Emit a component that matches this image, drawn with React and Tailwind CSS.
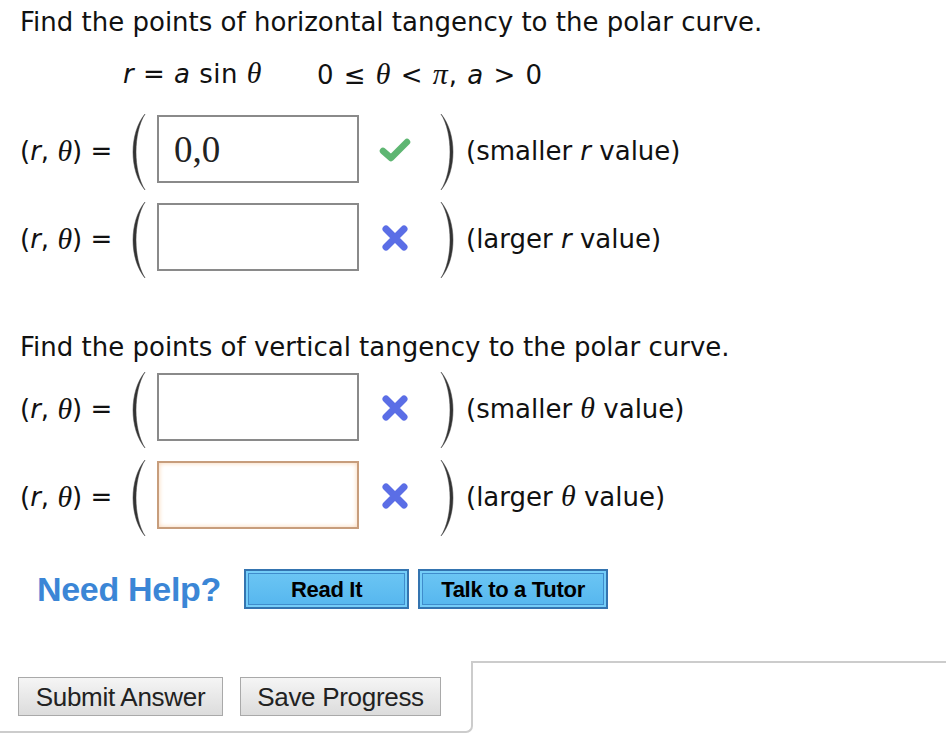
import React from "react";

const sans = { fontFamily: '"DejaVu Sans", Verdana, sans-serif' };

function Th() {
  return <span className="italic font-['Liberation_Serif',serif] text-[1.15em] leading-none">θ</span>;
}

function I({ children }) {
  return <span className="italic">{children}</span>;
}

function LeftParen() {
  return (
    <svg width="30" height="78" viewBox="0 0 30 78" className="shrink-0 -mt-[2px]">
      <path d="M20 1 C4 20, 4 58, 20 77 C8 58, 8 20, 20 1 Z" fill="#333" stroke="#444" strokeWidth="0.5" />
    </svg>
  );
}

function RightParen() {
  return (
    <svg width="30" height="78" viewBox="0 0 30 78" className="shrink-0 -mt-[2px]">
      <path d="M10 1 C26 20, 26 58, 10 77 C22 58, 22 20, 10 1 Z" fill="#333" stroke="#444" strokeWidth="0.5" />
    </svg>
  );
}

function Check() {
  return (
    <svg width="34" height="26" viewBox="0 0 34 26">
      <path d="M5 14 L13 21 L29 5" fill="none" stroke="#5eb672" strokeWidth="6.5" strokeLinecap="round" strokeLinejoin="round" />
    </svg>
  );
}

function Cross() {
  return (
    <svg width="28" height="28" viewBox="0 0 28 28">
      <path d="M5 5 L23 23 M23 5 L5 23" fill="none" stroke="#5b6ee6" strokeWidth="7" strokeLinecap="round" />
    </svg>
  );
}

function Row({ value, ok, focus, label, className = "" }) {
  return (
    <div className={"flex items-start h-[68px] " + className}>
      <div className="w-[105px] h-[68px] flex items-center pt-[4px] text-[26px] text-[#111] whitespace-nowrap">
        (<I>r</I>,&nbsp;<Th />) =
      </div>
      <LeftParen />
      <div
        className={
          "ml-[2px] w-[202px] h-[68px] shrink-0 flex items-center pl-[15px] bg-white border-2 " +
          (focus
            ? "border-[#c79d7c] shadow-[inset_0_0_5px_#f8d2b0]"
            : "border-[#8a8a8a]")
        }
      >
        {value && (
          <span className="font-['Liberation_Serif',serif] text-[37px] text-[#222] leading-none">
            {value}
          </span>
        )}
      </div>
      <div className="w-[72px] h-[68px] flex items-center justify-center pt-[2px]">
        {ok ? <Check /> : <Cross />}
      </div>
      <RightParen />
      <div className="ml-[5px] h-[68px] flex items-center pt-[4px] text-[26px] text-[#111] whitespace-nowrap">
        {label}
      </div>
    </div>
  );
}

const blueBtn =
  "h-[40px] border-2 border-[#3474b0] bg-gradient-to-b from-[#6cc6f4] to-[#55b6ee] shadow-[inset_0_0_0_2px_#74cdf8,inset_0_0_0_3px_#3f8ccc] font-['Liberation_Sans',Arial,sans-serif] font-bold text-[22px] text-black tracking-[-0.3px]";

const grayBtn =
  "h-[39px] border border-[#a9a9a9] bg-gradient-to-b from-[#f5f5f5] to-[#dcdcdc] font-['Liberation_Sans',Arial,sans-serif] text-[26px] text-[#222] tracking-[-0.3px]";

export default function App() {
  return (
    <div className="w-[946px] h-[738px] bg-white overflow-hidden" style={sans}>
      <div className="pl-[20px]">
        <div className="h-[44px] leading-[44px] text-[26px] text-[#111] whitespace-nowrap">
          Find the points of horizontal tangency to the polar curve.
        </div>
        <div className="h-[61px] flex items-center pl-[103px] text-[26px] text-[#111] whitespace-nowrap">
          <span className="tracking-[0.5px]">
            <I>r</I> = <I>a</I> sin <Th />
          </span>
          <span className="ml-[55px] whitespace-pre tracking-[1px]">
            0 ≤ <Th /> &lt; <span className="italic font-['Liberation_Serif',serif] text-[1.15em]">π</span>, <I>a</I> &gt; 0
          </span>
        </div>
        <Row className="mt-[10px]" value="0,0" ok label={<span>(smaller <I>r</I> value)</span>} />
        <Row className="mt-[20px]" label={<span>(larger <I>r</I> value)</span>} />
        <div className="mt-[54px] h-[44px] leading-[44px] text-[26px] text-[#111] whitespace-nowrap">
          Find the points of vertical tangency to the polar curve.
        </div>
        <Row className="mt-[4px]" label={<span>(smaller <Th /> value)</span>} />
        <Row className="mt-[20px]" focus label={<span>(larger <Th /> value)</span>} />
        <div className="mt-[40px] h-[40px] flex items-center">
          <span className="ml-[17px] font-['Liberation_Sans',Arial,sans-serif] font-bold text-[34px] text-[#3b86d6] tracking-[-0.3px]">
            Need Help?
          </span>
          <button className={"ml-[23px] w-[165px] " + blueBtn}>Read It</button>
          <button className={"ml-[9px] w-[190px] " + blueBtn}>Talk to a Tutor</button>
        </div>
      </div>
      <div className="mt-[52px] flex">
        <div className="w-[473px] h-[72px] border-r-2 border-b-2 border-[#cccccc] rounded-br-[7px] flex items-start pt-[16px] pl-[18px] gap-[17px]">
          <button className={"w-[205px] " + grayBtn}>Submit Answer</button>
          <button className={"w-[201px] " + grayBtn}>Save Progress</button>
        </div>
        <div className="flex-1 border-t-2 border-[#cccccc]" />
      </div>
    </div>
  );
}
